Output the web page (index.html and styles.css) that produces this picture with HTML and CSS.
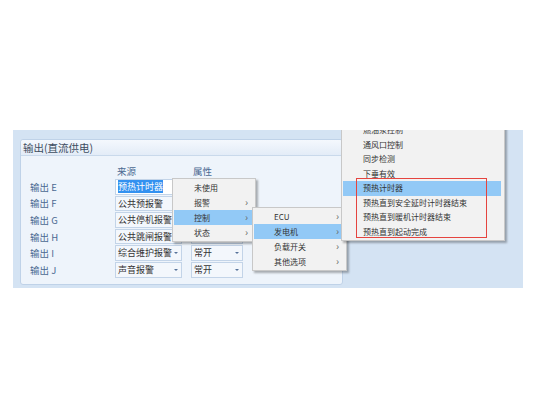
FILE: index.html
```html
<!DOCTYPE html>
<html lang="zh-CN">
<head>
    <meta charset="UTF-8">
    <title>输出(直流供电)</title>
    <link rel="stylesheet" href="styles.css">
</head>
<body>
<div class="frame">
    <div class="group">
        <div class="group-title">输出(直流供电)</div>
        <div class="group-body">
            <span></span>
            <span class="col-head">来源</span>
            <span class="col-head">属性</span>

            <span class="row-label">输出 E</span>
            <span class="combo editing"><span class="selected">预热计时器</span></span>
            <span class="combo"><i class="arrow"></i></span>

            <span class="row-label">输出 F</span>
            <span class="combo">公共预报警<i class="arrow"></i></span>
            <span class="combo"><i class="arrow"></i></span>

            <span class="row-label">输出 G</span>
            <span class="combo">公共停机报警<i class="arrow"></i></span>
            <span class="combo"><i class="arrow"></i></span>

            <span class="row-label">输出 H</span>
            <span class="combo">公共跳闸报警<i class="arrow"></i></span>
            <span class="combo"><i class="arrow"></i></span>

            <span class="row-label">输出 I</span>
            <span class="combo">综合维护报警<i class="arrow"></i></span>
            <span class="combo">常开<i class="arrow"></i></span>

            <span class="row-label">输出 J</span>
            <span class="combo">声音报警<i class="arrow"></i></span>
            <span class="combo">常开<i class="arrow"></i></span>
        </div>
    </div>

    <!-- context menus -->
    <ul class="menu menu-main">
        <li>未使用</li>
        <li class="sub">报警</li>
        <li class="sub active">控制</li>
        <li class="sub">状态</li>
    </ul>
    <ul class="menu menu-control">
        <li class="sub">ECU</li>
        <li class="sub active">发电机</li>
        <li class="sub">负载开关</li>
        <li class="sub">其他选项</li>
    </ul>
    <ul class="menu menu-gen">
        <li>燃油泵控制</li>
        <li>通风口控制</li>
        <li>同步检测</li>
        <li>下垂有效</li>
        <li class="active">预热计时器</li>
        <li>预热直到安全延时计时器结束</li>
        <li>预热直到暖机计时器结束</li>
        <li>预热直到起动完成</li>
    </ul>
    <div class="mark"></div>
</div>
</body>
</html>
```

FILE: styles.css
```css
body {
    margin: 0;
    background: #fff;
    font-family: "Noto Sans CJK SC", "Noto Sans", sans-serif;
    color: #333;
}

.frame {
    position: relative;
    overflow: hidden;
    margin: 130px 0 0 13px;
    width: 510px;
    height: 158px;
    padding: 9px 0 0 7px;
    box-sizing: border-box;
    background: #d4e3f3;
}

.group {
    width: 323px;
    height: 146px;
    box-sizing: border-box;
    border: 1px solid #bfd2e8;
    border-radius: 3px;
    background: #eef4fb;
}

.group-title {
    height: 15px;
    line-height: 15px;
    padding-left: 2px;
    font-size: 10.5px;
    color: #3d4d60;
    background: linear-gradient(#f4f8fd, #e3ecf7);
    border-bottom: 1px solid #c9d9eb;
    border-radius: 3px 3px 0 0;
}

.group-body {
    display: grid;
    grid-template-columns: 76px 67px 52px;
    grid-template-rows: 15px repeat(6, 15.6px);
    column-gap: 9px;
    row-gap: 1px;
    padding: 7px 0 0 9px;
    font-size: 9px;
    align-items: center;
}

.col-head {
    font-size: 9.5px;
    color: #4b6a92;
    padding-left: 2px;
}

.row-label {
    font-size: 9.5px;
    color: #4b6a92;
}

.combo {
    position: relative;
    height: 15.6px;
    line-height: 14px;
    box-sizing: border-box;
    padding-left: 2px;
    border: 1px solid #c3d4e8;
    background: #f3f7fc;
    color: #333;
    white-space: nowrap;
}

.combo.editing {
    background: #fff;
}

.combo .selected {
    background: #3391f0;
    color: #fff;
}

.arrow {
    position: absolute;
    right: 3px;
    top: 6px;
    border-left: 2px solid transparent;
    border-right: 2px solid transparent;
    border-top: 2px solid #56739a;
}

.menu {
    position: absolute;
    margin: 0;
    padding: 1px 0;
    list-style: none;
    background: #f2f2f2;
    border: 1px solid #c8c8c8;
    box-shadow: 2px 2px 2px rgba(0, 0, 0, 0.3);
    font-size: 8px;
    color: #333;
}

.menu li {
    position: relative;
    height: 15px;
    line-height: 15px;
    padding-left: 20px;
    margin: 0 3px 0 1px;
    white-space: nowrap;
}

.menu li.active {
    background: #92c9f6;
}

.menu li.sub::after {
    content: "›";
    position: absolute;
    right: 4px;
    top: -1px;
    font-size: 10px;
    color: #666;
}

.menu-main {
    left: 159px;
    top: 48px;
    width: 82px;
}

.menu-control {
    left: 239px;
    top: 77px;
    width: 93px;
}

.menu-gen {
    left: 328px;
    top: -9px;
    width: 162px;
}

.menu-gen li {
    height: 14.5px;
    line-height: 14.5px;
}

.mark {
    position: absolute;
    left: 343px;
    top: 48px;
    width: 131px;
    height: 60px;
    box-sizing: border-box;
    border: 1.5px solid #e5443f;
}
```
